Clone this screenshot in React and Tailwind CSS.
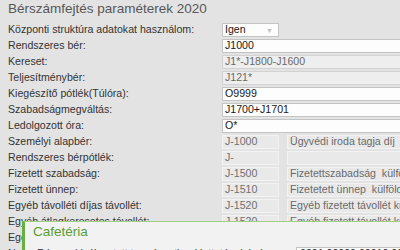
import React from "react";

const rows = [
  { label: "Központi struktúra adatokat használom:", type: "select", value: "Igen" },
  { label: "Rendszeres bér:", type: "edit", value: "J1000" },
  { label: "Kereset:", type: "ro", value: "J1*-J1800-J1600" },
  { label: "Teljesítménybér:", type: "ro", value: "J121*" },
  { label: "Kiegészítő pótlék(Túlóra):", type: "edit", value: "O9999" },
  { label: "Szabadságmegváltás:", type: "edit", value: "J1700+J1701" },
  { label: "Ledolgozott óra:", type: "edit", value: "O*" },
  { label: "Személyi alapbér:", type: "pair", value: "J-1000", desc: "Ügyvédi iroda tagja díj" },
  { label: "Rendszeres bérpótlék:", type: "pair", value: "J-", desc: "" },
  { label: "Fizetett szabadság:", type: "pair", value: "J-1500", desc: "Fizetettszabadság  külföldön" },
  { label: "Fizetett ünnep:", type: "pair", value: "J-1510", desc: "Fizetetett ünnep  külföldön" },
  { label: "Egyéb távolléti díjas távollét:", type: "pair", value: "J-1520", desc: "Egyéb fizetett távollét külföldön" },
  { label: "Egyéb átlagkeresetes távollét:", type: "pair", value: "J-1520", desc: "Egyéb fizetett távollét külföldön" },
  { label: "Egészségpénztár:", type: "pair", value: "J-", desc: "" },
  { label: "Nem rendszeres:", type: "pair", value: "J-", desc: "" },
];

function Field({ row }) {
  if (row.type === "select") {
    return (
      <div className="flex h-[14px] w-[57px] items-center justify-between border border-[#c4c4c4] bg-[#fdfdfd] pl-[2px] pr-[5px] text-[#1a1a1a]">
        <span>{row.value}</span>
        <span className="text-[7px] leading-none text-[#c0c0c0]">▼</span>
      </div>
    );
  }
  if (row.type === "edit") {
    return (
      <div className="flex h-[14px] flex-1 items-center border border-[#c4c4c4] bg-[#fdfdfd] pl-[2px] text-[#1a1a1a] whitespace-pre">
        {row.value}
      </div>
    );
  }
  if (row.type === "ro") {
    return (
      <div className="flex h-[14px] flex-1 items-center border border-[#d2d2d2] bg-[#eeeeee] pl-[2px] text-[#6a6a6a] whitespace-pre">
        {row.value}
      </div>
    );
  }
  return (
    <div className="flex flex-1 gap-[8px]">
      <div className="flex h-[14px] w-[57px] items-center border border-[#f2f2f2] bg-[#e9e9e9] pl-[2px] text-[#707070] whitespace-pre">
        {row.value}
      </div>
      <div className="flex h-[14px] flex-1 items-center overflow-hidden border border-[#f2f2f2] bg-[#e9e9e9] pl-[2px] text-[#6a6a6a] whitespace-pre">
        {row.desc}
      </div>
    </div>
  );
}

export default function App() {
  return (
    <div
      className="relative h-[250px] w-[400px] overflow-hidden bg-[#e3e3e3] pl-[8px]"
      style={{ fontFamily: '"Liberation Sans", Arial, sans-serif' }}
    >
      <div className="h-[22px] text-[13.5px] leading-[18px] text-[#575757]">
        Bérszámfejtés paraméterek 2020
      </div>
      <div className="flex flex-col text-[10.6px]">
        {rows.map((row, i) => (
          <div key={i} className="flex h-[16px] items-center">
            <div className="w-[214px] shrink-0 whitespace-nowrap text-[#333333]">{row.label}</div>
            <div className="flex flex-1 -mr-[40px]">
              <Field row={row} />
            </div>
          </div>
        ))}
      </div>

      <div className="absolute left-[22px] right-0 top-[221px] bottom-0 border-l-[3px] border-t border-l-[#6aaf42] border-t-[#9fcf80] bg-[#f2f2f2]">
        <div className="pl-[8px] pt-[2px] text-[13.5px] leading-[16px] text-[#5a9e30]">Cafetéria</div>
        <div className="mt-[6px] flex h-[16px] items-center text-[10.6px]">
          <div className="w-[271px] shrink-0 whitespace-nowrap pl-[12px] text-[#333333]">
            Részes kiválasztott természetbeni juttatások helyen:
          </div>
          <div className="flex h-[14px] flex-1 items-center border border-[#c4c4c4] bg-[#fdfdfd] pl-[3px] text-[#1a1a1a] whitespace-pre">
            0001;00000;00010;00011
          </div>
        </div>
      </div>
    </div>
  );
}
